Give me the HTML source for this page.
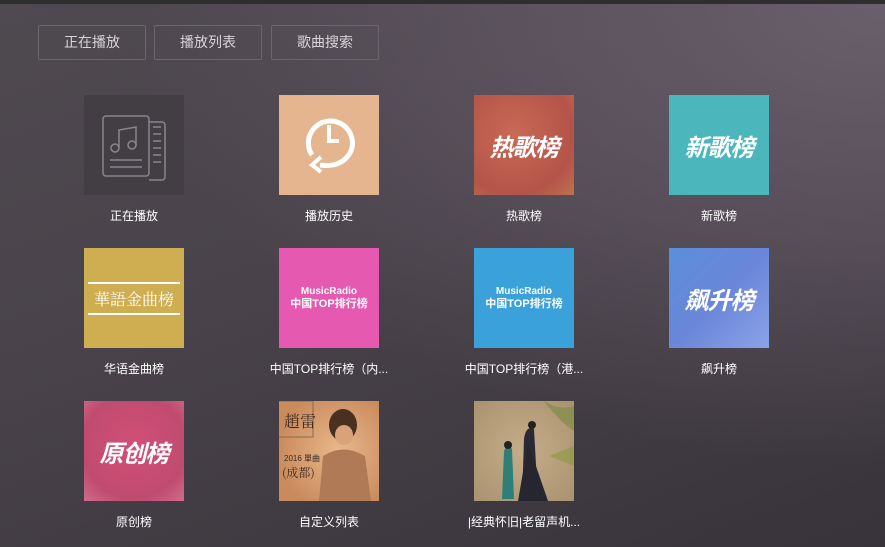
<!DOCTYPE html><html><head><meta charset="utf-8"><style>
*{margin:0;padding:0;box-sizing:border-box}
body{width:885px;height:547px;overflow:hidden;font-family:"Liberation Sans","Noto Sans CJK SC",sans-serif;background:linear-gradient(160deg,#4f4950 0%,#4a434b 40%,#38333a 100%);position:relative}
.bg2{position:absolute;inset:0;background:radial-gradient(ellipse at 100% 0%,#6a5f6c 0%,rgba(0,0,0,0) 60%)}
.top{position:absolute;left:0;top:0;width:885px;height:4px;background:#2e2e2e}
.btn{position:absolute;top:25px;height:35px;width:108px;border:1px solid #6c656d;border-radius:2px;color:#d8d4d8;font-size:14px;line-height:33px;text-align:center}
.t{position:absolute;width:100px;height:100px;overflow:hidden;display:flex;align-items:center;justify-content:center;color:#fff}
.l{position:absolute;width:140px;text-align:center;color:#fff;font-size:12px}
.big{font-size:24px;font-weight:bold;font-style:italic;letter-spacing:-1px}
.mr{text-align:center;font-weight:bold;line-height:12px}
</style></head><body><div class="bg2"></div><div class="top"></div>
<div class="btn" style="left:38px">正在播放</div>
<div class="btn" style="left:154px">播放列表</div>
<div class="btn" style="left:271px">歌曲搜索</div>

<div class="t" style="left:84px;top:95px;background:#433d44">
<svg width="100" height="100" viewBox="0 0 100 100" fill="none" stroke="#8a858b" stroke-width="1.5"><rect x="19" y="21" width="46" height="60" rx="3"/><path d="M65 27h13a3 3 0 0 1 3 3v52a3 3 0 0 1-3 3H65"/><path d="M69 32h8M69 39h8M69 46h8M69 53h8M69 60h8M69 67h8"/><circle cx="31" cy="53" r="4"/><circle cx="48" cy="50" r="4"/><path d="M35 53V35l17-3v18"/><path d="M26 65h32M26 72h32"/></svg></div>
<div class="l" style="left:64px;top:207px">正在播放</div>

<div class="t" style="left:279px;top:95px;background:#e4b58f">
<svg width="100" height="100" viewBox="0 0 100 100" fill="none" stroke="#fff" stroke-width="5"><path d="M33 60A22 22 0 1 1 71 58"/><path d="M50 30v16h10" stroke-width="4"/><path d="M71 58c-6 10-16 14-30 12"/><path d="M42 62l-9 8 9 7" stroke-width="4"/></svg></div>
<div class="l" style="left:259px;top:207px">播放历史</div>

<div class="t" style="left:474px;top:95px;background:radial-gradient(circle at 40% 40%,#c86a55,#b4544a 70%,#c07050)"><span class="big">热歌榜</span></div>
<div class="l" style="left:454px;top:207px">热歌榜</div>

<div class="t" style="left:669px;top:95px;background:#4bb6bb"><span class="big">新歌榜</span></div>
<div class="l" style="left:649px;top:207px">新歌榜</div>

<div class="t" style="left:84px;top:248px;background:#cfae52"><div style="border-top:2px solid #fff;border-bottom:2px solid #fff;padding:3px 6px;font-size:16px;font-family:'Noto Serif CJK SC',serif">華語金曲榜</div></div>
<div class="l" style="left:64px;top:360px">华语金曲榜</div>

<div class="t" style="left:279px;top:248px;background:#e659b0"><div class="mr"><div style="font-size:10px">MusicRadio</div><div style="font-size:11px">中国TOP排行榜</div></div></div>
<div class="l" style="left:259px;top:360px">中国TOP排行榜（内...</div>

<div class="t" style="left:474px;top:248px;background:#3aa1db"><div class="mr"><div style="font-size:10px">MusicRadio</div><div style="font-size:11px">中国TOP排行榜</div></div></div>
<div class="l" style="left:454px;top:360px">中国TOP排行榜（港...</div>

<div class="t" style="left:669px;top:248px;background:linear-gradient(135deg,#5b8fd8,#6a86d8 50%,#8aa2e8)"><span class="big">飙升榜</span></div>
<div class="l" style="left:649px;top:360px">飙升榜</div>

<div class="t" style="left:84px;top:401px;background:radial-gradient(circle at 50% 45%,#d24f78,#c04b70 70%,#d06c8a)"><span class="big">原创榜</span></div>
<div class="l" style="left:64px;top:513px">原创榜</div>

<div class="t" style="left:279px;top:401px;background:radial-gradient(circle at 60% 50%,#e8b88c,#c98a5c 80%)">
<svg width="100" height="100" viewBox="0 0 100 100"><path d="M0 0h34v36H0" fill="none" stroke="#8a6a50"/><text x="5" y="26" font-size="16" fill="#3a2a20" font-family="Noto Serif CJK SC">趙雷</text><text x="5" y="60" font-size="8" fill="#3a2a20">2016 單曲</text><text x="3" y="76" font-size="12" fill="#3a2a20" font-family="Noto Serif CJK SC">(成都)</text><ellipse cx="64" cy="24" rx="14" ry="16" fill="#4a3020"/><ellipse cx="65" cy="34" rx="9" ry="10" fill="#d9a27a"/><path d="M40 100L44 55Q64 42 86 55L92 100Z" fill="#b07a56"/></svg></div>
<div class="l" style="left:259px;top:513px">自定义列表</div>

<div class="t" style="left:474px;top:401px;background:radial-gradient(circle at 50% 50%,#c6ad88,#a99270)">
<svg width="100" height="100" viewBox="0 0 100 100"><path d="M48 100L50 38Q52 24 60 28L64 100Z" fill="#2a2a34"/><path d="M54 42L74 100H44Z" fill="#262630"/><circle cx="58" cy="24" r="4" fill="#222"/><path d="M28 98L30 50Q34 40 38 48L40 98Z" fill="#2d7f78"/><circle cx="34" cy="44" r="4" fill="#222"/><path d="M70 0Q85 10 100 5V30Q85 20 70 0Z" fill="#7a8a40" opacity=".6"/><path d="M75 55l25-10v20z" fill="#8a9a40" opacity=".6"/></svg></div>
<div class="l" style="left:454px;top:513px">|经典怀旧|老留声机...</div>
</body></html>
